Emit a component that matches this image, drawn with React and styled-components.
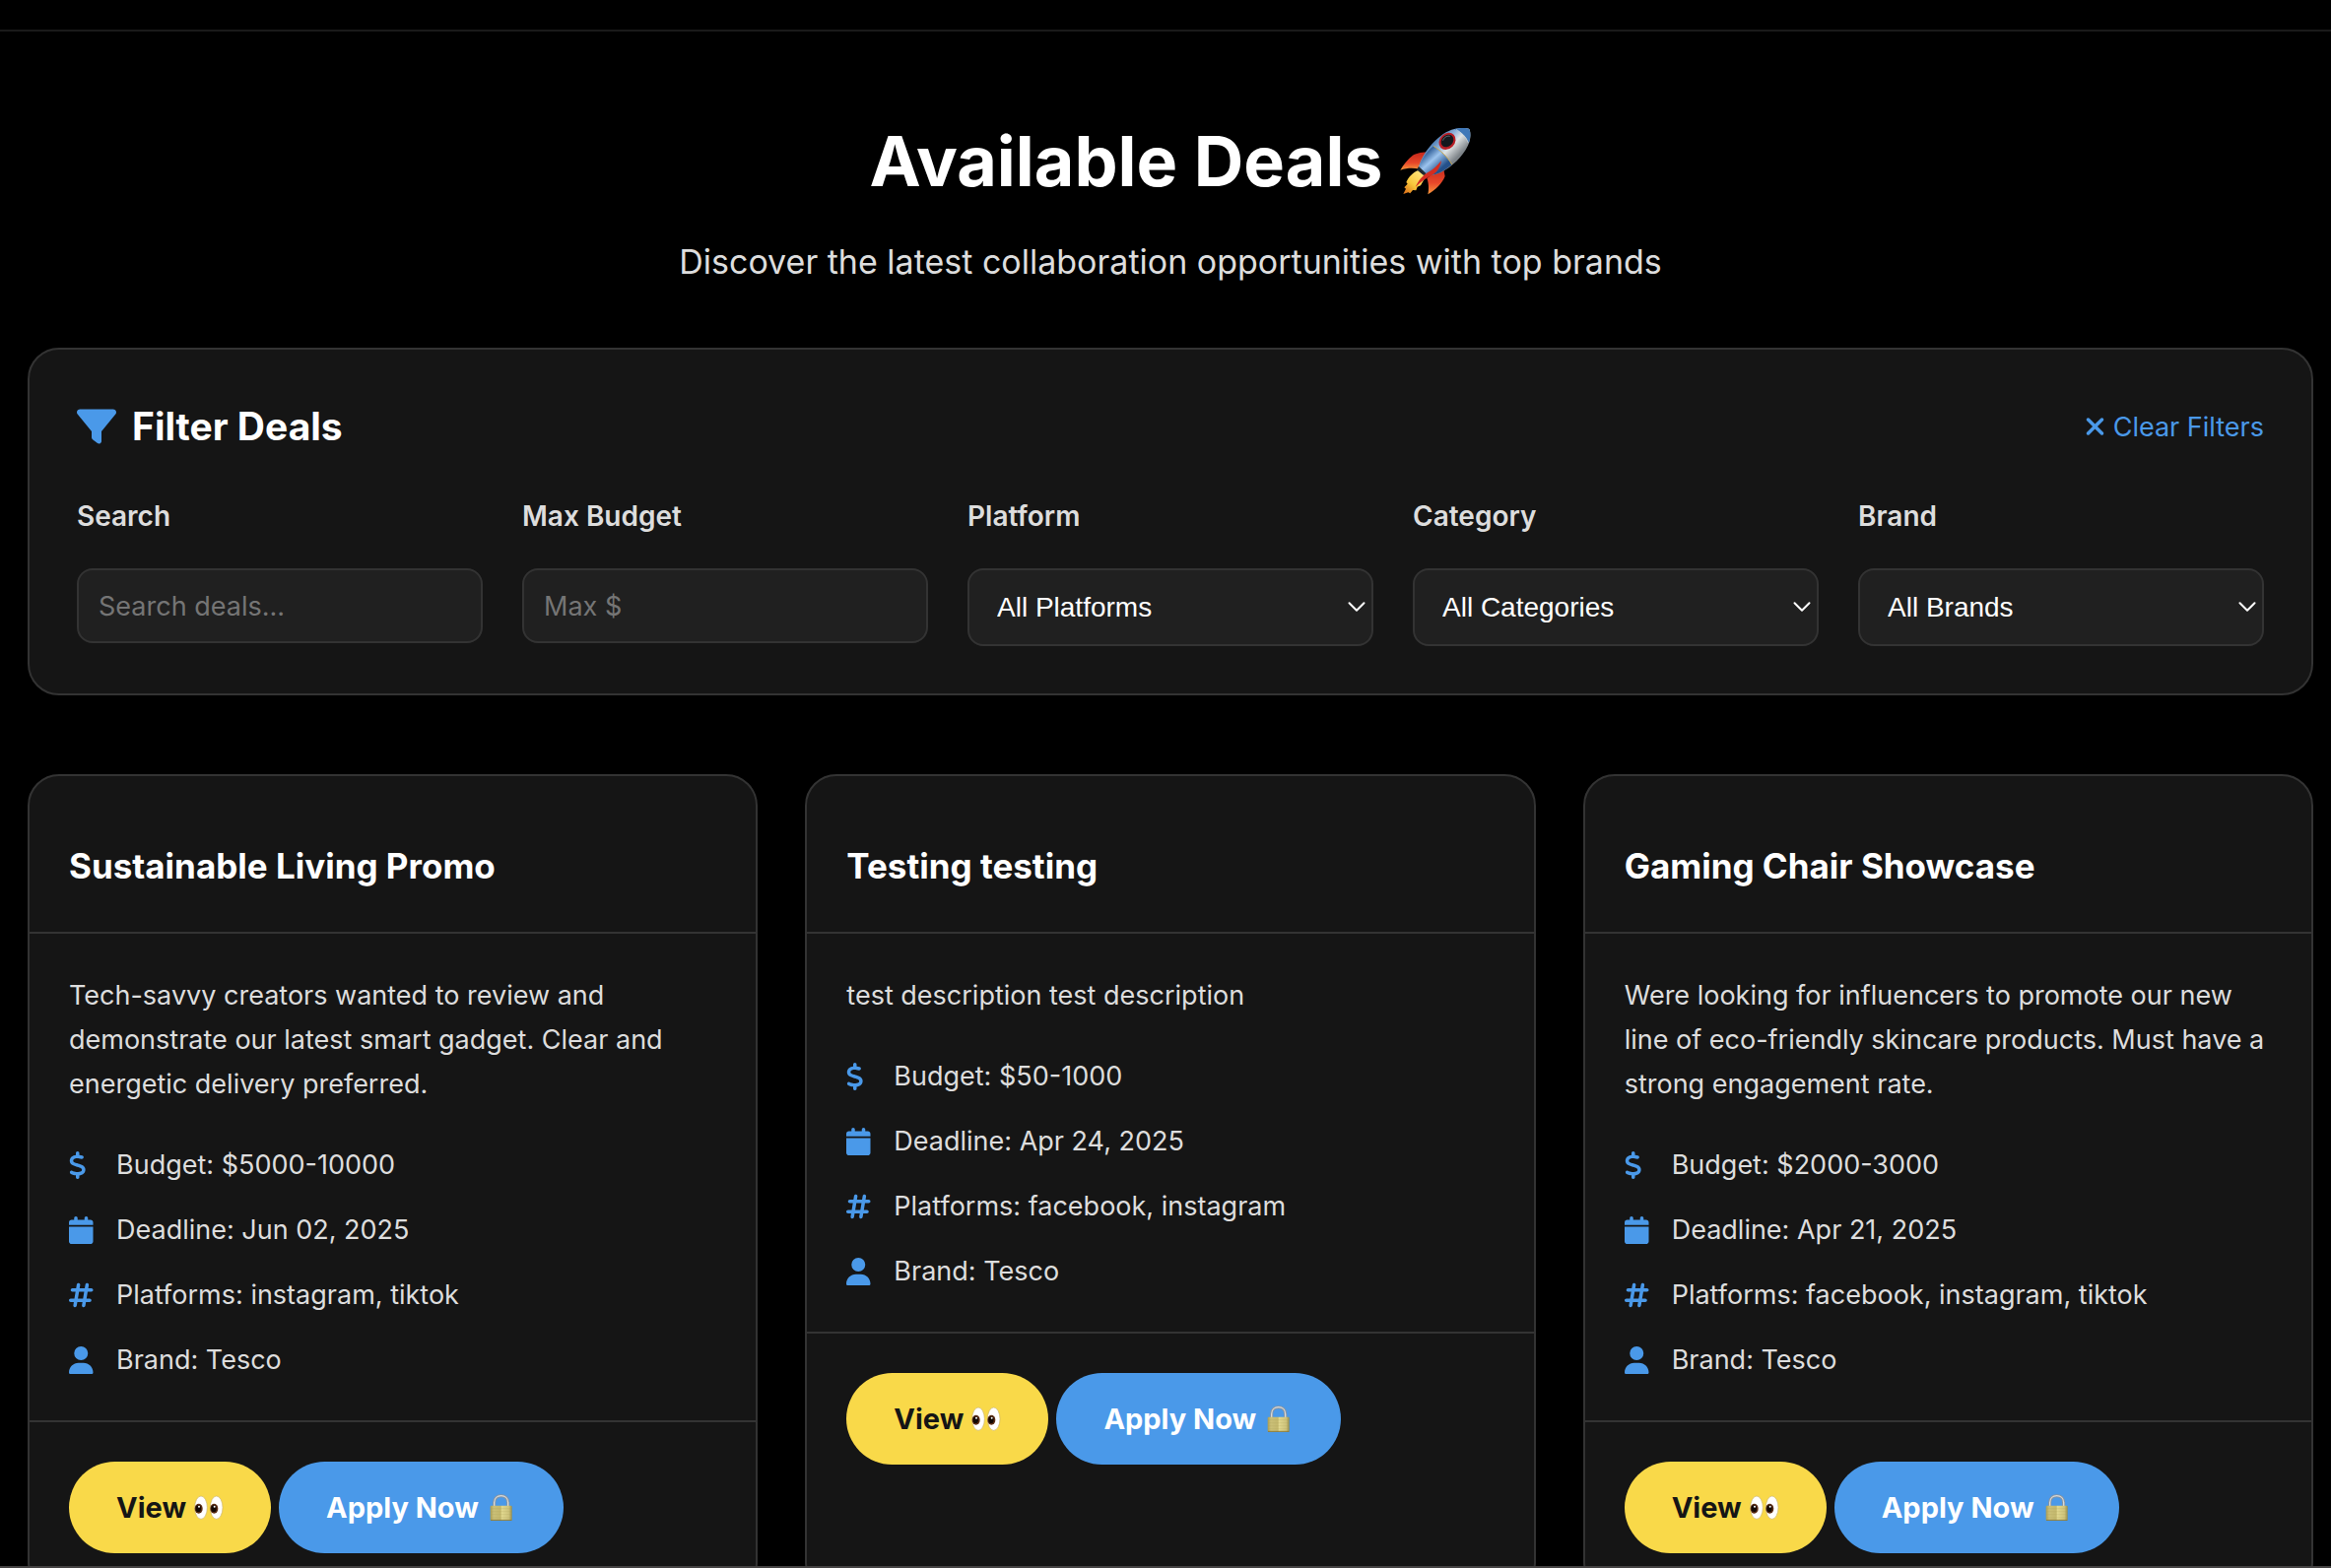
import React, {useState} from 'react';
import styled, {createGlobalStyle} from 'styled-components';
import {ChevronDown} from 'lucide-react';
import {FaCalendar, FaDollarSign, FaFilter, FaHashtag, FaUser, FaXmark} from 'react-icons/fa6';

const GlobalStyle = createGlobalStyle`
  * {
    box-sizing: border-box;
  }

  body {
    margin: 0;
    background: #000;
    color: #ddd;
    font-family: Inter, "Liberation Sans", sans-serif;
    font-size: 27px;
  }

  h1, h2, h3, p, ul {
    margin: 0;
    padding: 0;
  }
`;

const TopBar = styled.header`
  height: 32px;
  border-bottom: 2px solid #1a1a1a;
`;

const BottomBar = styled.div`
  position: fixed;
  right: 0;
  bottom: 0;
  left: 0;
  height: 2px;
  background: #454343;
`;

const Page = styled.main`
  padding: 80px 18px 80px 28px;
`;

const Intro = styled.section`
  margin-bottom: 57px;
  text-align: center;

  h1 {
    display: flex;
    justify-content: center;
    align-items: center;
    gap: 16px;
    margin-bottom: 20px;
    font-size: 70px;
    font-weight: 700;
    line-height: 104px;
    color: #fff;
  }

  p {
    font-size: 34px;
    line-height: 60px;
  }
`;

const FilterPanel = styled.section`
  margin-bottom: 80px;
  padding: 48px;
  border: 2px solid #333;
  border-radius: 32px;
  background: #151515;
`;

const FilterHead = styled.div`
  display: flex;
  justify-content: space-between;
  align-items: center;
  margin-bottom: 40px;

  h2 {
    display: flex;
    align-items: center;
    gap: 16px;
    font-size: 39px;
    font-weight: 700;
    line-height: 60px;
    color: #fff;
  }

  h2 svg {
    width: 40px;
    height: 40px;
    color: #4a99e9;
  }
`;

const ClearBtn = styled.button`
  display: flex;
  align-items: center;
  gap: 8px;
  padding: 0;
  border: none;
  background: none;
  font: inherit;
  color: #4a99e9;
  cursor: pointer;

  svg {
    width: 28px;
    height: 28px;
  }
`;

const FilterGrid = styled.div`
  display: grid;
  grid-template-columns: repeat(5, 1fr);
  align-items: start;
  gap: 40px;
`;

const Field = styled.div`
  display: flex;
  flex-direction: column;
  gap: 32px;
  min-width: 0;

  label {
    font-size: 28px;
    font-weight: 600;
    line-height: 42px;
  }
`;

const TextInput = styled.input`
  width: 100%;
  height: 76px;
  padding: 0 20px;
  border: 2px solid #333;
  border-radius: 16px;
  outline: none;
  background: #202020;
  font: inherit;
  color: #fff;

  &::placeholder {
    color: #757575;
  }
`;

const SelectBox = styled.div`
  position: relative;

  svg {
    position: absolute;
    top: 24px;
    right: 2px;
    color: #fff;
    pointer-events: none;
  }
`;

const Select = styled.select`
  display: block;
  width: 100%;
  height: 79px;
  padding: 0 28px;
  border: 2px solid #333;
  border-radius: 16px;
  outline: none;
  appearance: none;
  background: #202020;
  font-family: "Liberation Sans", Arial, sans-serif;
  font-size: 28px;
  color: #fff;
`;

const CardGrid = styled.section`
  display: grid;
  grid-template-columns: repeat(3, 1fr);
  gap: 48px;
`;

const Card = styled.article`
  border: 2px solid #333;
  border-radius: 32px;
  background: #151515;
`;

const CardHead = styled.div`
  padding: 64px 40px 40px;
  border-bottom: 2px solid #333;

  h3 {
    font-size: 35px;
    font-weight: 700;
    line-height: 54px;
    color: #fff;
  }
`;

const CardBody = styled.div`
  padding: 40px;

  p {
    margin-bottom: 39px;
    line-height: 45px;
  }
`;

const MetaList = styled.ul`
  display: flex;
  flex-direction: column;
  gap: 24px;
  list-style: none;
`;

const MetaItem = styled.li`
  display: grid;
  grid-template-columns: 32px 1fr;
  align-items: center;
  gap: 16px;
  line-height: 42px;

  svg {
    width: 28px;
    height: 28px;
    color: #4a99e9;
  }
`;

const CardFoot = styled.div`
  display: flex;
  gap: 8px;
  padding: 40px;
  border-top: 2px solid #333;
`;

const PillBtn = styled.button`
  display: flex;
  align-items: center;
  gap: 8px;
  height: 93px;
  padding: 0 48px;
  border: none;
  border-radius: 47px;
  background: ${({$primary}) => ($primary ? '#4a99e9' : '#f9d949')};
  font-family: inherit;
  font-size: 29px;
  font-weight: 700;
  color: ${({$primary}) => ($primary ? '#fff' : '#151515')};
  cursor: pointer;
`;

const Rocket = () => (
    <svg width="74" height="70" viewBox="58 58 222 210" aria-hidden="true">
        <defs>
            <linearGradient id="rocketBody" x1="150" y1="105" x2="215" y2="170" gradientUnits="userSpaceOnUse">
                <stop offset="0" stopColor="#3d6fa8"/>
                <stop offset="0.35" stopColor="#8fb4dc"/>
                <stop offset="0.6" stopColor="#dfe3e4"/>
                <stop offset="1" stopColor="#7d8388"/>
            </linearGradient>
            <linearGradient id="rocketTail" x1="135" y1="140" x2="180" y2="190" gradientUnits="userSpaceOnUse">
                <stop offset="0" stopColor="#2c5a94"/>
                <stop offset="0.45" stopColor="#9cc4ee"/>
                <stop offset="1" stopColor="#24508a"/>
            </linearGradient>
            <linearGradient id="rocketFin" x1="0" y1="0" x2="0" y2="1">
                <stop offset="0" stopColor="#c3261a"/>
                <stop offset="0.6" stopColor="#e8482a"/>
                <stop offset="1" stopColor="#f79a3c"/>
            </linearGradient>
            <linearGradient id="rocketFlame" x1="130" y1="195" x2="78" y2="255" gradientUnits="userSpaceOnUse">
                <stop offset="0" stopColor="#ffe680"/>
                <stop offset="0.6" stopColor="#f8c93c"/>
                <stop offset="1" stopColor="#e07a1c"/>
            </linearGradient>
        </defs>
        <path d="M116 190C98 198 86 212 80 226L84 231L74 242L79 246L71 262L86 257L92 260L100 250L110 251L114 240L124 236L140 208Z" fill="url(#rocketFlame)"/>
        <path d="M150 135C130 133 110 138 100 144C84 156 72 172 62 189C82 183 100 182 120 186Z" fill="url(#rocketFin)"/>
        <path d="M192 176L198 208C188 232 170 248 146 263C150 246 148 226 143 214Z" fill="url(#rocketFin)"/>
        <path d="M218 66C240 60 262 60 272 64C278 78 276 98 268 114C252 148 218 180 186 196C170 203 154 206 144 206L118 182C120 166 134 138 152 117C172 92 196 74 218 66Z" fill="url(#rocketBody)"/>
        <path d="M163 116C180 126 205 148 219 172C196 194 166 206 144 206L118 182C122 162 142 132 163 116Z" fill="url(#rocketTail)"/>
        <path d="M226 64C246 60 264 60 272 64C277 76 276 90 271 106C262 86 248 72 226 64Z" fill="#3f78b8"/>
        <path d="M232 65C248 74 262 88 269 106" fill="none" stroke="#c9d4dc" strokeWidth="2"/>
        <path d="M163 116C182 127 207 150 219 172" fill="none" stroke="#c9a94e" strokeWidth="3"/>
        <ellipse cx="205" cy="101" rx="28" ry="23" transform="rotate(-45 205 101)" fill="#b91f26"/>
        <ellipse cx="205" cy="100" rx="21" ry="17" transform="rotate(-45 205 100)" fill="#14181d"/>
        <path d="M192 99C194 90 204 84 213 86" fill="none" stroke="#65717c" strokeWidth="3"/>
        <path d="M118 178L141 200L132 204L112 188Z" fill="#20282e"/>
        <path d="M187 160C184 182 172 198 156 206C142 213 126 224 108 241C116 222 130 206 146 196C162 188 174 176 187 160Z" fill="#d42d20"/>
    </svg>
);

const Eyes = () => (
    <svg width="30" height="26" viewBox="0 0 90 78" aria-hidden="true">
        {[0, 47].map((x) => (
            <g key={x} transform={`translate(${x} 0)`}>
                <ellipse cx="21" cy="38" rx="19" ry="35" fill="#fff" stroke="#cbb36a" strokeWidth="2"/>
                <ellipse cx="14" cy="41" rx="12" ry="15" fill="#5a2c14"/>
                <ellipse cx="13" cy="41" rx="8" ry="10" fill="#120805"/>
                <circle cx="15" cy="35" r="3" fill="#fff"/>
            </g>
        ))}
    </svg>
);

const Lock = () => (
    <svg width="30" height="28" viewBox="0 0 90 84" aria-hidden="true">
        <defs>
            <linearGradient id="lockBody" x1="0" x2="1">
                <stop offset="0" stopColor="#a89c55"/>
                <stop offset="0.15" stopColor="#cbc078"/>
                <stop offset="0.48" stopColor="#c4b86d"/>
                <stop offset="0.52" stopColor="#e2d88f"/>
                <stop offset="0.85" stopColor="#cfc47c"/>
                <stop offset="1" stopColor="#9a8e4a"/>
            </linearGradient>
        </defs>
        <path d="M23 36V26C23 12 33 5 44 5C55 5 65 12 65 26V36" fill="none" stroke="#8d949b" strokeWidth="9"/>
        <path d="M23 36V26C23 12 33 5 44 5C55 5 65 12 65 26V36" fill="none" stroke="#d5dade" strokeWidth="4"/>
        <rect x="11" y="35" width="66" height="46" rx="3" fill="url(#lockBody)"/>
        <path d="M12 44H76M12 53H76M12 62H76M12 71H76" stroke="#a69a55" strokeWidth="1" opacity="0.6"/>
        <path d="M12 79H76" stroke="#857940" strokeWidth="3"/>
    </svg>
);

const selects = [
    {id: 'platform', label: 'Platform', options: ['All Platforms', 'facebook', 'instagram', 'tiktok']},
    {id: 'category', label: 'Category', options: ['All Categories']},
    {id: 'brand', label: 'Brand', options: ['All Brands', 'Tesco']},
];

const deals = [
    {
        title: 'Sustainable Living Promo',
        description: 'Tech-savvy creators wanted to review and demonstrate our latest smart gadget. Clear and energetic delivery preferred.',
        budget: '$5000-10000',
        deadline: 'Jun 02, 2025',
        platforms: 'instagram, tiktok',
        brand: 'Tesco',
    },
    {
        title: 'Testing testing',
        description: 'test description test description',
        budget: '$50-1000',
        deadline: 'Apr 24, 2025',
        platforms: 'facebook, instagram',
        brand: 'Tesco',
    },
    {
        title: 'Gaming Chair Showcase',
        description: 'Were looking for influencers to promote our new line of eco-friendly skincare products. Must have a strong engagement rate.',
        budget: '$2000-3000',
        deadline: 'Apr 21, 2025',
        platforms: 'facebook, instagram, tiktok',
        brand: 'Tesco',
    },
];

const emptyFilters = {
    search: '',
    budget: '',
    platform: 'All Platforms',
    category: 'All Categories',
    brand: 'All Brands',
};

function Filters() {
    const [filters, setFilters] = useState(emptyFilters);
    const handleOnChange = (e) => setFilters({...filters, [e.target.id]: e.target.value});

    return (
        <FilterPanel>
            <FilterHead>
                <h2><FaFilter/>Filter Deals</h2>
                <ClearBtn type="button" onClick={() => setFilters(emptyFilters)}>
                    <FaXmark preserveAspectRatio="xMaxYMid"/>Clear Filters
                </ClearBtn>
            </FilterHead>
            <FilterGrid>
                <Field>
                    <label htmlFor="search">Search</label>
                    <TextInput id="search" placeholder="Search deals..." value={filters.search} onChange={handleOnChange}/>
                </Field>
                <Field>
                    <label htmlFor="budget">Max Budget</label>
                    <TextInput id="budget" placeholder="Max $" value={filters.budget} onChange={handleOnChange}/>
                </Field>
                {selects.map(({id, label, options}) => (
                    <Field key={id}>
                        <label htmlFor={id}>{label}</label>
                        <SelectBox>
                            <Select id={id} value={filters[id]} onChange={handleOnChange}>
                                {options.map((option) => <option key={option}>{option}</option>)}
                            </Select>
                            <ChevronDown size={30} strokeWidth={1.6}/>
                        </SelectBox>
                    </Field>
                ))}
            </FilterGrid>
        </FilterPanel>
    );
}

// the glyphs differ in width, so they are all drawn from the left edge of their box
function Meta({icon: Icon, children}) {
    return <MetaItem><Icon preserveAspectRatio="xMinYMid"/><span>{children}</span></MetaItem>;
}

function DealCard({deal}) {
    return (
        <Card>
            <CardHead>
                <h3>{deal.title}</h3>
            </CardHead>
            <CardBody>
                <p>{deal.description}</p>
                <MetaList>
                    <Meta icon={FaDollarSign}>Budget: {deal.budget}</Meta>
                    <Meta icon={FaCalendar}>Deadline: {deal.deadline}</Meta>
                    <Meta icon={FaHashtag}>Platforms: {deal.platforms}</Meta>
                    <Meta icon={FaUser}>Brand: {deal.brand}</Meta>
                </MetaList>
            </CardBody>
            <CardFoot>
                <PillBtn type="button">View <Eyes/></PillBtn>
                <PillBtn type="button" $primary>Apply Now <Lock/></PillBtn>
            </CardFoot>
        </Card>
    );
}

export default function App() {
    return (
        <>
            <GlobalStyle/>
            <TopBar/>
            <Page>
                <Intro>
                    <h1>Available Deals <Rocket/></h1>
                    <p>Discover the latest collaboration opportunities with top brands</p>
                </Intro>
                <Filters/>
                <CardGrid>
                    {deals.map((deal) => <DealCard key={deal.title} deal={deal}/>)}
                </CardGrid>
            </Page>
            <BottomBar/>
        </>
    );
}
